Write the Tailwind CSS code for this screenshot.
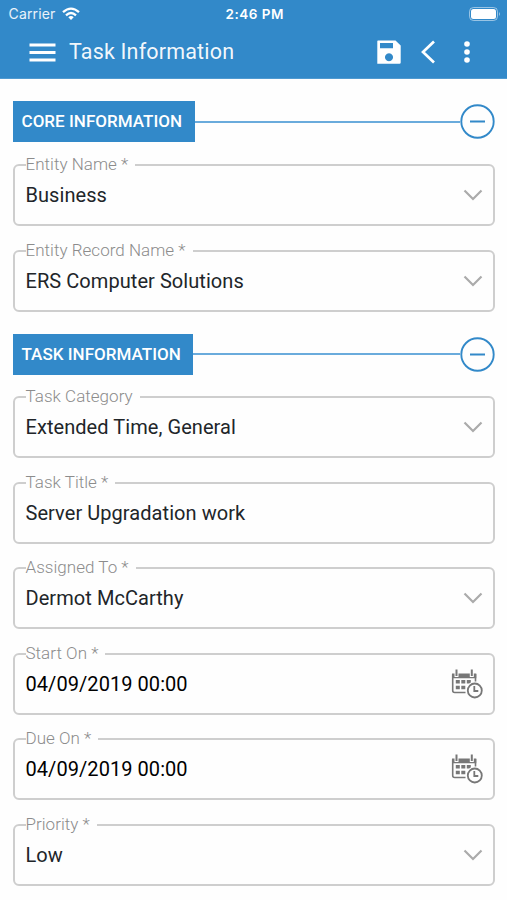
<!DOCTYPE html>
<html lang="en">
<head>
<meta charset="utf-8">
<title>Task Information</title>
<script src="https://cdn.jsdelivr.net/npm/@tailwindcss/browser@4"></script>
</head>
<body class="w-[507px] h-[900px] overflow-hidden bg-[#fefefe] font-['Roboto',sans-serif] text-[#212529]">
<svg class="hidden">
  <symbol id="chevron" viewBox="0 0 20 12"><path d="M1.500 1.500 10 10 18.500 1.500" fill="none" stroke="#ababab" stroke-width="2.200"/></symbol>
  <symbol id="calendar" viewBox="0 0 32 30">
    <g fill="none" stroke="#777">
      <path d="M14.500 23.500H3.700Q1.700 23.500 1.700 21.500V5.200M24.500 5V12.500" stroke-width="1.600"/>
      <path d="M5.500 0.500V7M20.800 0.500V7" stroke-width="2"/>
      <circle cx="23.800" cy="21.500" r="7" stroke-width="1.800"/>
      <path d="M23.300 17V22H27.300" stroke-width="1.800"/>
    </g>
    <path d="M1 4.500H3.500V8H7.500V4.500H18.800V8H22.800V4.500H25.300V9.300H1Z" fill="#777"/>
    <path d="M4.800 11h4v3.500h-4zM10.300 11h4v3.500h-4zM15.800 11h4v2.500l-1.700 1h-2.300zM4.800 16.700h4v3.500h-4zM10.300 16.700h4v3.500h-4z" fill="#777"/>
  </symbol>
</svg>

<header class="h-[79px] border-b border-[#4f9ad1] bg-[#3289c9] text-white">
  <div class="grid h-[27px] grid-cols-3 items-center pl-[8.500px] pr-[6px] font-['Inter',sans-serif]">
    <div class="flex items-center gap-[7px]">
      <span class="text-[14px] tracking-[0.15px] text-white/90">Carrier</span>
      <svg class="h-[13px] w-[18px]" viewBox="0 0 18 13" fill="none" stroke="#fff" stroke-width="2.300"><path d="M1 5.200Q9-2 17 5.200"/><path d="M4 8.300Q9 3.800 14 8.300"/><path d="M6.300 10.200Q9 7.900 11.700 10.200L9 12.900Z" fill="#fff" stroke="none"/></svg>
    </div>
    <span class="pt-px text-center text-[13.500px] font-semibold tracking-[0.5px] whitespace-nowrap">2:46 PM</span>
    <svg class="h-[14px] w-[32px] justify-self-end" viewBox="0 0 32 14"><rect x=".5" y=".5" width="28" height="13" rx="4" fill="none" stroke="#fff" stroke-opacity=".5"/><rect x="2" y="2" width="25" height="10" rx="2.500" fill="#fff"/><path d="M30 5q2 2 0 4z" fill="#fff" fill-opacity=".5"/></svg>
  </div>
  <div class="flex h-[50px] items-center pl-[29px] pr-[37px]">
    <svg class="h-[20px] w-[27px]" viewBox="0 0 27 20"><path d="M0.500 3h26M0.500 10.500h26M0.500 18h26" stroke="#fff" stroke-width="2.800"/></svg>
    <h1 class="ml-[13px] flex-1 text-[21.500px] leading-[28px] tracking-[0.18px] text-white/95">Task Information</h1>
    <svg class="h-[24px] w-[24px]" viewBox="0 0 24 24"><path fill="#fff" fill-rule="evenodd" d="M1 0.500H18.500L23.700 5.500V22.500Q23.700 23.700 22.500 23.700H0.300V1.200Q0.300 .5 1 .5ZM3 3V8.300H16V3ZM12 13.300a4 4 0 1 0 .01 0Z"/></svg>
    <svg class="ml-[19px] h-[24px] w-[16px]" viewBox="0 0 16 24"><path d="M14 1.500 3 12 14 22.500" fill="none" stroke="#fff" stroke-width="2.700"/></svg>
    <svg class="ml-[28px] h-[22px] w-[6px]" viewBox="0 0 6 22" fill="#fff"><circle cx="3" cy="3" r="2.800"/><circle cx="3" cy="11" r="2.800"/><circle cx="3" cy="19" r="2.800"/></svg>
  </div>
</header>

<main class="pl-[13px] pr-[12px] pt-[22px]">
  <section>
    <div class="flex h-[41px] items-center">
      <h2 class="flex h-[41px] w-[182px] items-center bg-[#3289c9] pt-px pl-[8.500px] text-[17px] font-medium tracking-[0.03px] whitespace-nowrap text-white">CORE INFORMATION</h2>
      <div class="h-[2px] flex-1 bg-[#6aabdc]"></div>
      <svg class="h-[35px] w-[35px]" viewBox="0 0 35 35"><circle cx="17.500" cy="17.500" r="16.200" fill="none" stroke="#3289c9" stroke-width="1.900"/><path d="M10 17.500h15" stroke="#3289c9" stroke-width="2"/></svg>
    </div>
    <div class="mt-[13px] flex flex-col gap-[14.600px]">
      <fieldset class="h-[71px] rounded-[6px] border-2 border-[#cecece] pl-[10.500px] pr-[10px]">
        <legend class="h-[20px] pr-[7px] text-[17px] leading-[19px] font-light tracking-[0.03px] text-[#8c8c8c]">Entity Name *</legend>
        <div class="flex h-[40px] items-center justify-between"><span class="text-[20px] tracking-[0.06px]">Business</span><svg class="h-[12px] w-[20px]"><use href="#chevron"/></svg></div>
      </fieldset>
      <fieldset class="h-[71px] rounded-[6px] border-2 border-[#cecece] pl-[10.500px] pr-[10px]">
        <legend class="h-[20px] pr-[7px] text-[17px] leading-[19px] font-light tracking-[0.03px] text-[#8c8c8c]">Entity Record Name *</legend>
        <div class="flex h-[40px] items-center justify-between"><span class="text-[20px] tracking-[0.06px]">ERS Computer Solutions</span><svg class="h-[12px] w-[20px]"><use href="#chevron"/></svg></div>
      </fieldset>
    </div>
  </section>

  <section class="mt-[22px]">
    <div class="flex h-[41px] items-center">
      <h2 class="flex h-[41px] w-[180px] items-center bg-[#3289c9] pt-px pl-[8.500px] text-[17px] font-medium tracking-[0.03px] whitespace-nowrap text-white">TASK INFORMATION</h2>
      <div class="h-[2px] flex-1 bg-[#6aabdc]"></div>
      <svg class="h-[35px] w-[35px]" viewBox="0 0 35 35"><circle cx="17.500" cy="17.500" r="16.200" fill="none" stroke="#3289c9" stroke-width="1.900"/><path d="M10 17.500h15" stroke="#3289c9" stroke-width="2"/></svg>
    </div>
    <div class="mt-[12.500px] flex flex-col gap-[14.600px]">
      <fieldset class="h-[71px] rounded-[6px] border-2 border-[#cecece] pl-[10.500px] pr-[10px]">
        <legend class="h-[20px] pr-[7px] text-[17px] leading-[19px] font-light tracking-[0.03px] text-[#8c8c8c]">Task Category</legend>
        <div class="flex h-[40px] items-center justify-between"><span class="text-[20px] tracking-[0.06px]">Extended Time, General</span><svg class="h-[12px] w-[20px]"><use href="#chevron"/></svg></div>
      </fieldset>
      <fieldset class="h-[71px] rounded-[6px] border-2 border-[#cecece] pl-[10.500px] pr-[10px]">
        <legend class="h-[20px] pr-[7px] text-[17px] leading-[19px] font-light tracking-[0.03px] text-[#8c8c8c]">Task Title *</legend>
        <div class="flex h-[40px] items-center justify-between"><span class="text-[20px] tracking-[0.06px]">Server Upgradation work</span></div>
      </fieldset>
      <fieldset class="h-[71px] rounded-[6px] border-2 border-[#cecece] pl-[10.500px] pr-[10px]">
        <legend class="h-[20px] pr-[7px] text-[17px] leading-[19px] font-light tracking-[0.03px] text-[#8c8c8c]">Assigned To *</legend>
        <div class="flex h-[40px] items-center justify-between"><span class="text-[20px] tracking-[0.06px]">Dermot McCarthy</span><svg class="h-[12px] w-[20px]"><use href="#chevron"/></svg></div>
      </fieldset>
      <fieldset class="h-[71px] rounded-[6px] border-2 border-[#cecece] pl-[10.500px] pr-[10px]">
        <legend class="h-[20px] pr-[7px] text-[17px] leading-[19px] font-light tracking-[0.03px] text-[#8c8c8c]">Start On *</legend>
        <div class="flex h-[40px] items-center justify-between"><span class="text-[20px] tracking-[0.06px] text-black">04/09/2019 00:00</span><svg class="h-[30px] w-[32px]"><use href="#calendar"/></svg></div>
      </fieldset>
      <fieldset class="h-[71px] rounded-[6px] border-2 border-[#cecece] pl-[10.500px] pr-[10px]">
        <legend class="h-[20px] pr-[7px] text-[17px] leading-[19px] font-light tracking-[0.03px] text-[#8c8c8c]">Due On *</legend>
        <div class="flex h-[40px] items-center justify-between"><span class="text-[20px] tracking-[0.06px] text-black">04/09/2019 00:00</span><svg class="h-[30px] w-[32px]"><use href="#calendar"/></svg></div>
      </fieldset>
      <fieldset class="h-[71px] rounded-[6px] border-2 border-[#cecece] pl-[10.500px] pr-[10px]">
        <legend class="h-[20px] pr-[7px] text-[17px] leading-[19px] font-light tracking-[0.03px] text-[#8c8c8c]">Priority *</legend>
        <div class="flex h-[40px] items-center justify-between"><span class="text-[20px] tracking-[0.06px]">Low</span><svg class="h-[12px] w-[20px]"><use href="#chevron"/></svg></div>
      </fieldset>
    </div>
  </section>
</main>
</body>
</html>
